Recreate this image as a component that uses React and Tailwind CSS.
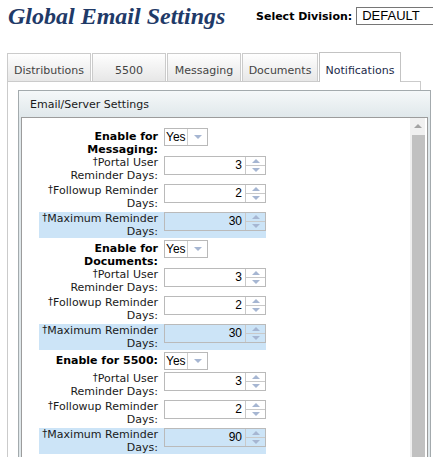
import React from "react";

const sans = "font-['Liberation_Sans',Arial,sans-serif]";

const TriUp = ({ color = "#a6b6d2" }) => (
  <svg width="8" height="4" viewBox="0 0 8 4">
    <path d="M0 4 L4 0 L8 4 Z" fill={color} />
  </svg>
);

const TriDown = ({ color = "#a6b6d2" }) => (
  <svg width="8" height="4" viewBox="0 0 8 4">
    <path d="M0 0 L8 0 L4 4 Z" fill={color} />
  </svg>
);

const Dagger = () => <span className="text-[10px] align-top leading-[11px]">†</span>;

const tabs = [
  { name: "Distributions", w: "w-[84px]" },
  { name: "5500", w: "w-[74px]" },
  { name: "Messaging", w: "w-[74px]" },
  { name: "Documents", w: "w-[76px]" },
];

const YesSelect = () => (
  <div className="ml-[3px] w-[44px] h-[18px] flex border border-[#b9b9b9] bg-white">
    <div className={`w-[23px] pl-[1px] text-[12px] leading-[16px] text-black border-r border-[#cfcfcf] ${sans}`}>
      Yes
    </div>
    <div className="flex-1 flex items-center justify-center">
      <TriDown />
    </div>
  </div>
);

const EnableRow = ({ lines }) => (
  <div className={`flex w-[227px] ${lines.length > 1 ? "h-[26px]" : "h-[18px]"}`}>
    <div className="w-[122px] pr-[3px] text-right font-bold leading-[13px] text-black pt-[2px]">
      {lines.map((l) => (
        <div key={l} className="whitespace-nowrap">
          {l}
        </div>
      ))}
    </div>
    <YesSelect />
  </div>
);

const NumberRow = ({ lines, value, highlight }) => (
  <div className={`flex w-[227px] h-[26px] ${highlight ? "bg-[#cce4f7]" : ""}`}>
    <div className="w-[122px] pr-[3px] text-right leading-[13px] text-[#1a1a1a]">
      {lines.map((l, i) => (
        <div key={i} className="whitespace-nowrap">
          {i === 0 && <Dagger />}
          {l}
        </div>
      ))}
    </div>
    <div
      className={`ml-[3px] w-[102px] h-[19px] flex border border-[#bababa] ${
        highlight ? "bg-[#cce4f7]" : "bg-white"
      }`}
    >
      <div className={`flex-1 pr-[3px] text-right text-[12px] leading-[17px] text-black ${sans}`}>
        {value}
      </div>
      <div className="w-[20px] flex flex-col border-l border-[#c9c9c9]">
        <div className="flex-1 flex items-center justify-center border-b border-[#c9c9c9]">
          <TriUp />
        </div>
        <div className="flex-1 flex items-center justify-center">
          <TriDown />
        </div>
      </div>
    </div>
  </div>
);

const sections = [
  { enable: ["Enable for", "Messaging:"], max: "30" },
  { enable: ["Enable for", "Documents:"], max: "30" },
  { enable: ["Enable for 5500:"], max: "90" },
];

export default function App() {
  return (
    <div className="w-[433px] h-[457px] overflow-hidden bg-white font-['DejaVu_Sans',Verdana,sans-serif] text-[11px]">
      {/* page heading */}
      <div className="h-[52px] flex pt-[4px] pl-[8px]">
        <h1 className="w-[248px] shrink-0 text-[24px] leading-[24px] font-bold italic text-[#1f3a68] font-['Liberation_Serif','Times_New_Roman',serif] whitespace-nowrap">
          Global Email Settings
        </h1>
        <div className="flex shrink-0 items-center h-[18px] mt-[3px]">
          <span className="font-bold text-black leading-[13px] whitespace-nowrap">Select Division:</span>
          <div
            className={`ml-[4px] w-[100px] shrink-0 h-[18px] border border-[#767676] pl-[5px] text-[13px] leading-[16px] text-black ${sans}`}
          >
            DEFAULT
          </div>
        </div>
      </div>

      {/* tabs */}
      <div className="flex items-end gap-[1px] pl-[7px] h-[29px] relative z-10">
        {tabs.map((t) => (
          <div
            key={t.name}
            className={`${t.w} h-[28px] pt-[10px] text-center leading-[13px] text-[#444] border-t border-l border-r border-[#cbcbcb] bg-gradient-to-b from-[#fefefe] to-[#e7e7e7] whitespace-nowrap`}
          >
            {t.name}
          </div>
        ))}
        <div className="w-[82px] h-[30px] -mb-[1px] pt-[11px] text-center leading-[13px] text-[#1b2a4a] border-t border-l border-r border-[#c3c3c3] bg-white whitespace-nowrap">
          Notifications
        </div>
      </div>

      {/* tab panel */}
      <div className="ml-[7px] w-[414px] h-[400px] border-t border-l border-r border-[#cbcbcb] pt-[8px] pl-[10px]">
        <div className="w-[413px] h-[380px] border border-[#a3aaad] bg-[#dfe7ea] flex flex-col">
          <div className="h-[26px] pl-[11px] pt-[3px] flex items-center text-[#1a1a1a] bg-gradient-to-b from-[#f5f8f9] to-[#e0e8eb] whitespace-nowrap">
            Email/Server Settings
          </div>
          <div className="mx-[2px] flex-1 flex border border-[#9c9c9c] bg-white">
            <div className="flex-1 pl-[17px] pt-[10px] flex flex-col gap-[2px]">
              {sections.map((s) => (
                <React.Fragment key={s.enable.join(" ")}>
                  <EnableRow lines={s.enable} />
                  <NumberRow lines={["Portal User", "Reminder Days:"]} value="3" />
                  <NumberRow lines={["Followup Reminder", "Days:"]} value="2" />
                  <NumberRow lines={["Maximum Reminder", "Days:"]} value={s.max} highlight />
                </React.Fragment>
              ))}
            </div>
            <div className="w-[15px] mr-[2px] flex flex-col bg-[#f0f0f0]">
              <div className="h-[16px] flex items-center justify-center">
                <TriUp color="#a3a3a3" />
              </div>
              <div className="flex-1 ml-[2px] mt-[1px] bg-[#c1c1c1]" />
            </div>
          </div>
        </div>
      </div>
    </div>
  );
}
